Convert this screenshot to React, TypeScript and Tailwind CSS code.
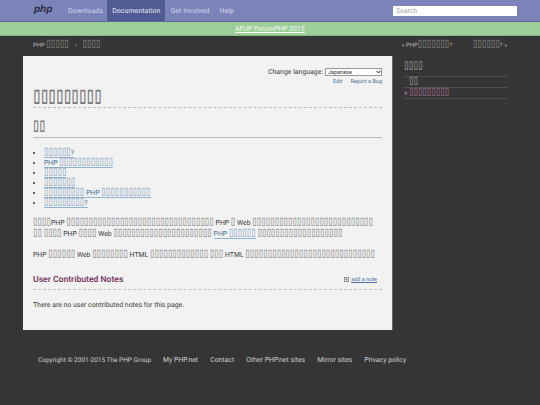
function T({ n, className = "" }: { n: number; className?: string }) {
  return (
    <span className={`inline-block scale-y-[1.6] font-['Fira_Sans','Noto_Sans',sans-serif] text-[7.6px] leading-none opacity-45 ${className}`}>{"▯".repeat(n)}</span>
  );
}

const navItems = [
  { label: "Downloads", className: "ml-[15px]" },
  { label: "Documentation", className: "ml-[4px] px-[5px] bg-[#4f5b93] text-[#e8eaf3]" },
  { label: "Get Involved", className: "ml-[5px]" },
  { label: "Help", className: "ml-[10px]" },
];

const footerLinks = ["My PHP.net", "Contact", "Other PHP.net sites", "Mirror sites", "Privacy policy"];

const linkCls = "border-b border-[#8fb0cf] text-[#47709c]";

function App() {
  return (
    <div className="h-[405px] w-[540px] overflow-hidden bg-[#333333] font-['Roboto',sans-serif] text-[6.9px] leading-[10px] text-[#3c3c3c] opacity-[.99] [text-rendering:geometricPrecision]">
      <header className="flex h-[22px] items-stretch border-b border-[#5f6796] bg-[#7a82b9] pl-[34px] pr-[23px]">
        <span className="mt-[4px] w-[19px] font-['Liberation_Sans',sans-serif] text-[10px] leading-[12px] font-bold text-[#26263a] italic">php</span>
        {navItems.map((item) => (
          <span key={item.label} className={`flex items-center tracking-[0.1px] text-[#d4d7ea] ${item.className}`}>
            {item.label}
          </span>
        ))}
        <div className="ml-auto flex h-[10px] w-[124px] items-center self-center bg-white px-[3px] text-[#aaa]">Search</div>
      </header>

      <div className="flex h-[14px] items-center justify-center border-b border-[#86b884] bg-[#9ccf99]">
        <span className="text-[#f6faf6] underline underline-offset-1">AFUP ForumPHP 2015</span>
      </div>

      <div className="flex h-[20px] items-center px-[33px] text-[6px] text-[#bbb]">
        <span>PHP <T n={5} className="text-[6.2px]" /></span>
        <span className="mx-[6px]">›</span>
        <T n={4} className="text-[6.2px]" />
        <span className="ml-auto">« PHP<T n={7} className="text-[6.2px]" />?</span>
        <span className="ml-[21px]"><T n={6} className="text-[6.2px]" />? »</span>
      </div>

      <div className="flex items-start pl-[23px]">
        <main className="h-[274px] w-[370px] border-r border-[#666] bg-[#f2f2f2] px-[10px] pt-[11px]">
          <div className="flex items-center justify-end">
            <span>Change language:</span>
            <div className="relative ml-[2px] flex h-[8px] w-[57px]">
              <select className="h-full w-full appearance-none border border-[#999] bg-white pl-[2px] text-[5.5px] leading-[6px]">
                <option>Japanese</option>
              </select>
              <svg width="5" height="4" viewBox="0 0 5 4" className="absolute top-[2px] right-[1px]" fill="none" stroke="#222" strokeWidth="1">
                <path d="M0.5 0.8 2.5 3l2-2.2" />
              </svg>
            </div>
          </div>
          <div className="mt-[1px] flex justify-end text-[5.5px] leading-[8px] text-[#47709c]">
            <span>Edit</span>
            <span className="ml-[8px]">Report a Bug</span>
          </div>
          <h1 className="mt-[6px] border-b border-dashed border-[#bbb] leading-[13px] text-[#333]"><T n={9} className="text-[13px] opacity-60" /></h1>
          <h2 className="mt-[12px] border-b border-[#bbb] leading-[17px] text-[#333]"><T n={2} className="text-[10.5px] opacity-60" /></h2>
          <ul className="mt-[10px] list-disc pl-[11px] leading-[10px] marker:text-[#333]">
            <li><span className={linkCls}><T n={6} />?</span></li>
            <li><span className={linkCls}>PHP <T n={12} /></span></li>
            <li><span className={linkCls}><T n={5} /></span></li>
            <li><span className={linkCls}><T n={7} /></span></li>
            <li><span className={linkCls}><T n={9} /> PHP <T n={11} /></span></li>
            <li><span className={linkCls}><T n={9} />?</span></li>
          </ul>
          <p className="mt-[10px] leading-[10.5px]">
            <T n={4} />PHP <T n={33} /> PHP <T n={1} /> Web <T n={27} />
            <br />
            <T n={2} /> <T n={4} /> PHP <T n={4} /> Web <T n={22} /> <span className={linkCls}>PHP <T n={6} /></span> <T n={19} />
          </p>
          <p className="mt-[11px] leading-[10.5px]">
            PHP <T n={6} /> Web <T n={8} /> HTML <T n={13} /> <T n={3} /> HTML <T n={29} />
          </p>
          <div className="mt-[13px] flex items-center justify-between border-b border-dashed border-[#cbbcc6] pb-[3px]">
            <h3 className="text-[8.6px] leading-[12px] font-semibold text-[#793862]">User Contributed Notes</h3>
            <span className="flex items-center pr-[5px] text-[5.5px] text-[#47709c]">
              <svg width="5" height="5" viewBox="0 0 5 5" className="mr-[2px]" fill="none" stroke="#666" strokeWidth="0.6">
                <rect x="0.3" y="0.3" width="4.4" height="4.4" />
                <path d="M2.5 1.2v2.6M1.2 2.5h2.6" />
              </svg>
              <span className="underline underline-offset-1">add a note</span>
            </span>
          </div>
          <p className="mt-[10px]">There are no user contributed notes for this page.</p>
        </main>

        <aside className="ml-[11px] w-[103px] pt-[5px] text-[#ddd]">
          <div className="border-b border-[#4a4a4a] pb-[3px] leading-[12px]"><T n={4} className="text-[8px]" /></div>
          <div className="border-b border-[#4a4a4a] pl-[5px] leading-[10px]"><T n={2} /></div>
          <div className="border-b border-[#4a4a4a] leading-[10px] text-[#e58fca]">» <T n={9} /></div>
        </aside>
      </div>

      <footer className="mt-[25px] flex pl-[38px] text-[#cfcfcf]">
        <span className="text-[6.5px]">Copyright © 2001-2015 The PHP Group</span>
        {footerLinks.map((link) => (
          <span key={link} className="ml-[12px]">{link}</span>
        ))}
      </footer>
    </div>
  );
}

export default App;
